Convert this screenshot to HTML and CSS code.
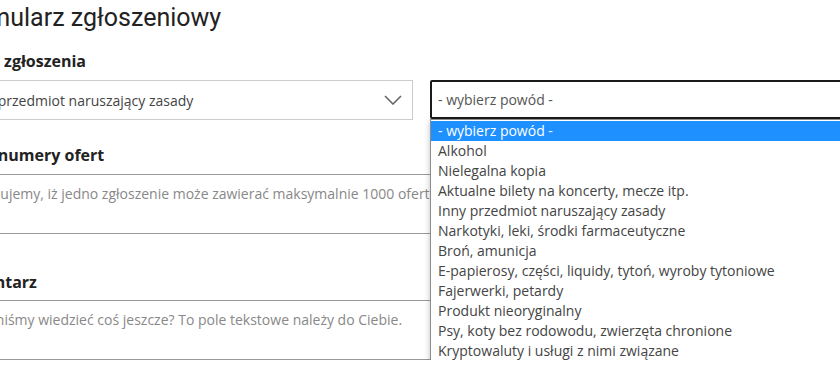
FILE: index.html
```html
<!DOCTYPE html>
<html lang="pl">
<head>
    <meta charset="UTF-8">
    <meta name="viewport" content="width=device-width, initial-scale=1.0">
    <title>Formularz zgłoszeniowy</title>
    <link rel="stylesheet" href="styles.css">
</head>
<body>
    <div class="report-form">
        <h2 class="form-title">Formularz zgłoszeniowy</h2>
        <div class="field-label label-type">Rodzaj zgłoszenia</div>
        <div class="select-row">
            <div class="select-box">
                <span>Inny przedmiot naruszający zasady</span>
                <svg class="chevron" width="18" height="10" viewBox="0 0 18 10">
                    <path d="M1 1 L9 9 L17 1" fill="none" stroke="#666" stroke-width="1.6"/>
                </svg>
            </div>
            <div class="select-wrap">
                <div class="select-box select-open">- wybierz powód -</div>
                <ul class="option-list">
                    <li class="selected">- wybierz powód -</li>
                    <li>Alkohol</li>
                    <li>Nielegalna kopia</li>
                    <li>Aktualne bilety na koncerty, mecze itp.</li>
                    <li>Inny przedmiot naruszający zasady</li>
                    <li>Narkotyki, leki, środki farmaceutyczne</li>
                    <li>Broń, amunicja</li>
                    <li>E-papierosy, części, liquidy, tytoń, wyroby tytoniowe</li>
                    <li>Fajerwerki, petardy</li>
                    <li>Produkt nieoryginalny</li>
                    <li>Psy, koty bez rodowodu, zwierzęta chronione</li>
                    <li>Kryptowaluty i usługi z nimi związane</li>
                </ul>
            </div>
        </div>

        <div class="field-label label-offers">Podaj numery ofert</div>
        <textarea class="text-field" placeholder="Informujemy, iż jedno zgłoszenie może zawierać maksymalnie 1000 ofert"></textarea>

        <div class="field-label label-comment">Komentarz</div>
        <textarea class="text-field" placeholder="Powinniśmy wiedzieć coś jeszcze? To pole tekstowe należy do Ciebie."></textarea>
    </div>
</body>
</html>
```

FILE: styles.css
```css
body {
    margin: 0;
    background-color: #fff;
    font-family: "Open Sans", Arial, sans-serif;
    color: #222;
    overflow: hidden;
}
.report-form {
    margin-left: -51px;
    width: 970px;
}
.form-title {
    margin: 0 0 0 3px;
    padding-top: 4px;
    font-family: Roboto, Arial, sans-serif;
    font-size: 25px;
    font-weight: 400;
    line-height: 28px;
    color: #222;
}
.field-label {
    font-size: 16px;
    font-weight: 700;
    line-height: 22px;
    color: #222;
}
.label-type {
    margin-top: 18px;
    margin-bottom: 8px;
    margin-left: -2px;
}
.label-offers {
    margin-top: 24px;
    margin-bottom: 8px;
}
.label-comment {
    margin-top: 37px;
    margin-bottom: 7px;
}
.select-row {
    display: grid;
    grid-template-columns: 464px 1fr;
    gap: 17px;
}
.select-box {
    box-sizing: border-box;
    height: 40px;
    display: flex;
    align-items: center;
    justify-content: space-between;
    padding: 0 10px 0 16px;
    border: 1px solid #ccc;
    font-size: 14px;
    color: #444;
}
.select-wrap {
    position: relative;
}
.select-open {
    height: 39px;
    padding-left: 6px;
    border: 2px solid #1a1a1a;
    border-radius: 2px;
    color: #555;
}
.option-list {
    position: absolute;
    top: 39px;
    left: 0;
    right: 0;
    margin: 0;
    padding: 1px 0;
    list-style: none;
    background-color: #fff;
    border: 1px solid #8c8c8c;
    box-shadow: 0 2px 6px rgba(0, 0, 0, 0.25);
    z-index: 2;
}
.option-list li {
    height: 20px;
    line-height: 20px;
    padding-left: 7px;
    font-size: 14px;
    color: #444;
}
.option-list li.selected {
    background-color: #1e90ff;
    color: #fff;
}
.text-field {
    display: block;
    box-sizing: border-box;
    width: 100%;
    height: 60px;
    margin: 0;
    padding: 9px 6px;
    border: 1px solid #9a9a9a;
    font-family: "Open Sans", Arial, sans-serif;
    font-size: 14px;
    resize: none;
}
.text-field::placeholder {
    color: #888;
}
```
